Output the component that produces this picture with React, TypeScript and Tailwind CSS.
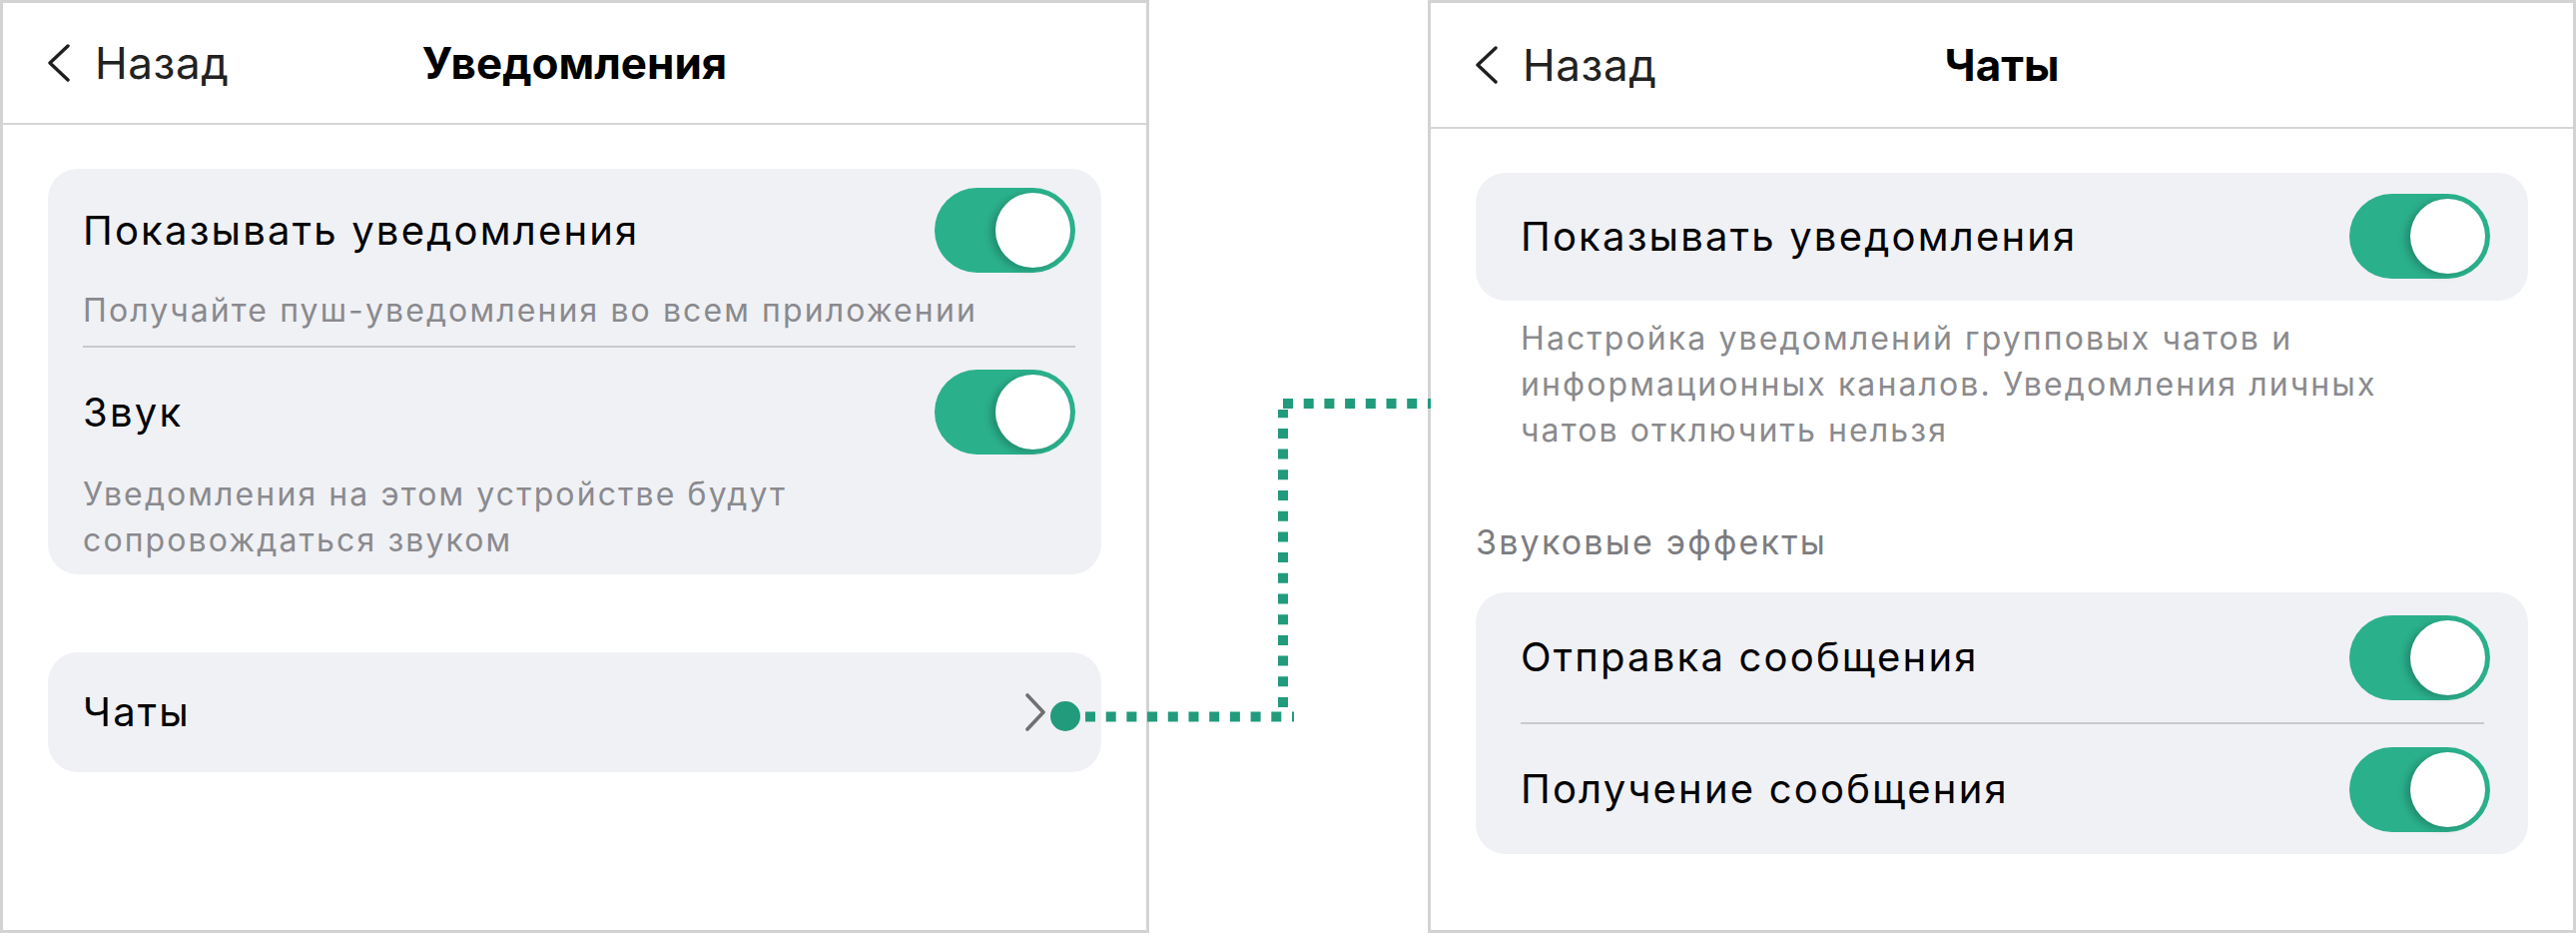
import React from "react";

const font = { fontFamily: "Inter, 'Noto Sans', 'DejaVu Sans', sans-serif" };

function Toggle() {
  return (
    <div className="w-[141px] h-[85px] rounded-full bg-[#2bb08c] p-[5px] flex justify-end shrink-0">
      <div className="w-[75px] h-[75px] rounded-full bg-white shadow-[-5px_2px_7px_rgba(0,0,0,0.2)]" />
    </div>
  );
}

function BackChevron() {
  return (
    <svg width="24" height="38" viewBox="0 0 24 38" fill="none">
      <polyline points="21,2 3,19 21,36" stroke="#1f1f1f" strokeWidth="3.4" strokeLinecap="round" strokeLinejoin="round" />
    </svg>
  );
}

function Header({ title, tall }: { title: string; tall?: boolean }) {
  return (
    <div
      className={`grid grid-cols-[1fr_auto_1fr] items-center border-b-2 border-[#d6d6d6] ${tall ? "h-[126px]" : "h-[122px]"}`}
    >
      <div className="flex items-center pl-[44px] gap-[24px]">
        <BackChevron />
        <span className="text-[44px] leading-none tracking-[0.6px] text-[#222222]">Назад</span>
      </div>
      <div className="text-[44px] font-bold leading-none text-black">{title}</div>
      <div />
    </div>
  );
}

export default function App() {
  return (
    <div className="relative w-[2580px] h-[934px] bg-white flex" style={font}>
      {/* Left panel */}
      <div className="w-[1151px] h-[934px] border-[3px] border-[#d3d3d3] flex flex-col">
        <Header title="Уведомления" />
        <div className="px-[45px] pt-[44px]">
          <div className="bg-[#f0f1f5] rounded-[30px] pt-[19px] pb-[11px] pl-[35px] pr-[26px]">
            <div className="flex items-center justify-between h-[85px]">
              <span className="text-[40px] tracking-[2.2px] text-black">Показывать уведомления</span>
              <Toggle />
            </div>
            <div className="mt-[15px] text-[32px] leading-[46px] tracking-[2.1px] text-[#8a8a8e]">
              Получайте пуш-уведомления во всем приложении
            </div>
            <div className="mt-[12px] h-[2px] bg-[#c9c9cd]" />
            <div className="mt-[22px] flex items-center justify-between h-[85px]">
              <span className="text-[40px] tracking-[2.2px] text-black">Звук</span>
              <Toggle />
            </div>
            <div className="mt-[17px] text-[32px] leading-[46px] tracking-[2.1px] text-[#8a8a8e]">
              Уведомления на этом устройстве будут
              <br />
              сопровождаться звуком
            </div>
          </div>
          <div className="mt-[78px] h-[120px] bg-[#f0f1f5] rounded-[30px] pl-[35px] pr-[55px] flex items-center justify-between">
            <span className="text-[40px] tracking-[2.2px] text-black">Чаты</span>
            <svg width="22" height="38" viewBox="0 0 22 38" fill="none">
              <polyline points="3,2 19,19 3,36" stroke="#707070" strokeWidth="3.6" strokeLinecap="round" strokeLinejoin="round" />
            </svg>
          </div>
        </div>
      </div>

      <div className="w-[279px]" />

      {/* Right panel */}
      <div className="w-[1150px] h-[934px] border-[3px] border-[#d3d3d3] flex flex-col">
        <Header title="Чаты" tall />
        <div className="px-[45px] pt-[44px]">
          <div className="bg-[#f0f1f5] rounded-[30px] pt-[21px] pb-[22px] pl-[45px] pr-[38px] flex items-center justify-between">
            <span className="text-[40px] tracking-[2.2px] text-black">Показывать уведомления</span>
            <Toggle />
          </div>
          <div className="mt-[15px] pl-[45px] text-[32px] leading-[46px] tracking-[2.1px] text-[#8a8a8e]">
            Настройка уведомлений групповых чатов и
            <br />
            информационных каналов. Уведомления личных
            <br />
            чатов отключить нельзя
          </div>
          <div className="mt-[66px] text-[34px] leading-[46px] tracking-[2.2px] text-[#7c7c80]">Звуковые эффекты</div>
          <div className="mt-[27px] bg-[#f0f1f5] rounded-[30px] pt-[22px] pb-[22px] pl-[45px] pr-[38px]">
            <div className="flex items-center justify-between h-[86px]">
              <span className="text-[40px] tracking-[2.2px] text-black">Отправка сообщения</span>
              <Toggle />
            </div>
            <div className="mt-[22px] mr-[6px] h-[2px] bg-[#c9c9cd]" />
            <div className="mt-[22px] flex items-center justify-between h-[86px]">
              <span className="text-[40px] tracking-[2.2px] text-black">Получение сообщения</span>
              <Toggle />
            </div>
          </div>
        </div>
      </div>

      {/* Connector overlay */}
      <svg className="absolute left-0 top-0 pointer-events-none" width="2580" height="934" viewBox="0 0 2580 934">
        <circle cx="1067" cy="717" r="15" fill="#219b7c" />
        <line x1="1087" y1="717.5" x2="1296" y2="717.5" stroke="#219b7c" strokeWidth="10" strokeDasharray="10 10.7" />
        <line x1="1285" y1="708" x2="1285" y2="410" stroke="#219b7c" strokeWidth="10" strokeDasharray="10 10.7" />
        <line x1="1285" y1="404" x2="1433" y2="404" stroke="#219b7c" strokeWidth="10" strokeDasharray="10 10.7" />
      </svg>
    </div>
  );
}
